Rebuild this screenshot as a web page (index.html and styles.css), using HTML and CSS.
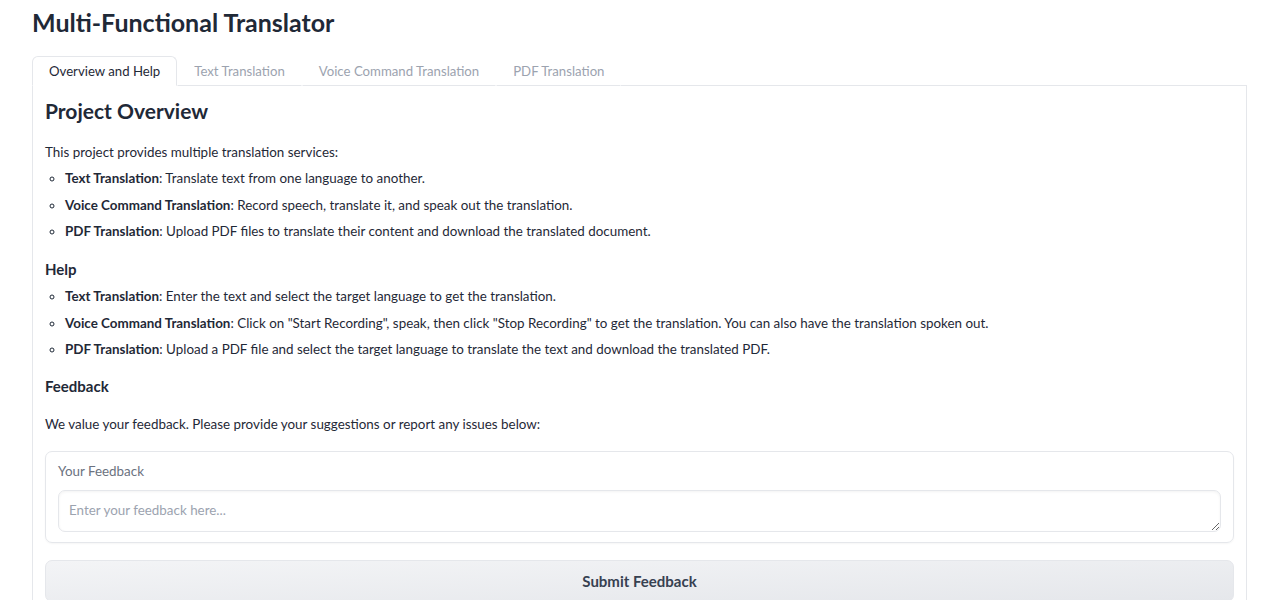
FILE: index.html
```html
<!DOCTYPE html>
<html>
<head>
<meta charset="utf-8">
<link rel="stylesheet" href="styles.css">
</head>
<body>
<div class="app">
  <h1 class="title">Multi-Functional Translator</h1>
  <div class="tabs">
    <div class="tab active">Overview and Help</div>
    <div class="tab">Text Translation</div>
    <div class="tab">Voice Command Translation</div>
    <div class="tab">PDF Translation</div>
    <div class="tab-fill"></div>
  </div>
  <div class="panel">
    <h2 class="h2">Project Overview</h2>
    <p class="para">This project provides multiple translation services:</p>
    <ul class="list">
      <li><b>Text Translation</b>: Translate text from one language to another.</li>
      <li><b>Voice Command Translation</b>: Record speech, translate it, and speak out the translation.</li>
      <li><b>PDF Translation</b>: Upload PDF files to translate their content and download the translated document.</li>
    </ul>
    <h3 class="h3">Help</h3>
    <ul class="list">
      <li><b>Text Translation</b>: Enter the text and select the target language to get the translation.</li>
      <li><b>Voice Command Translation</b>: Click on "Start Recording", speak, then click "Stop Recording" to get the translation. You can also have the translation spoken out.</li>
      <li><b>PDF Translation</b>: Upload a PDF file and select the target language to translate the text and download the translated PDF.</li>
    </ul>
    <h3 class="h3 fb">Feedback</h3>
    <p class="para value">We value your feedback. Please provide your suggestions or report any issues below:</p>
    <div class="block">
      <label class="label">Your Feedback</label>
      <textarea class="textarea" placeholder="Enter your feedback here..."></textarea>
    </div>
    <button class="btn">Submit Feedback</button>
  </div>
</div>
</body>
</html>
```
FILE: styles.css
```css
* { box-sizing: border-box; }
body {
  margin: 0;
  background: #ffffff;
  font-family: "Lato", "Noto Sans", sans-serif;
  color: #1f2937;
}
.app {
  padding: 0 39px 0 32px;
}
.title {
  margin: 0;
  padding-top: 5px;
  height: 56px;
  font-size: 25px;
  font-weight: 700;
  line-height: 34px;
  color: #1f2937;
}
.tabs {
  display: flex;
  height: 30px;
  align-items: stretch;
}
.tab {
  padding: 0 16px;
  font-size: 13.2px;
  line-height: 29px;
  color: #9ca3af;
  border: 1px solid transparent;
  border-bottom: 1px solid #e5e7eb;
}
.tab.active {
  color: #1f2937;
  border: 1px solid #e5e7eb;
  border-bottom-color: #ffffff;
  border-radius: 6px 6px 0 0;
}
.tab-fill {
  flex: 1;
  border-bottom: 1px solid #e5e7eb;
}
.panel {
  border: 1px solid #e5e7eb;
  border-top: none;
  padding: 10px 12px 0 12px;
  height: 515px;
  overflow: hidden;
}
.h2 {
  margin: 0 0 16px 0;
  font-size: 21px;
  font-weight: 700;
  line-height: 30px;
}
.para {
  margin: 0 0 5px 0;
  font-size: 13.4px;
  line-height: 21px;
}
.list {
  list-style: circle;
  margin: 0;
  padding-left: 20px;
}
.list li {
  font-size: 13.4px;
  line-height: 21px;
  margin-bottom: 5.5px;
  padding-left: 0;
}
.list b { font-weight: 700; }
.h3 {
  margin: 16px 0 6px 0;
  font-size: 15px;
  font-weight: 700;
  line-height: 22px;
}
.h3.fb { margin-top: 15px; margin-bottom: 17px; }
.value { margin-bottom: 16px; }
.block {
  border: 1px solid #e5e7eb;
  border-radius: 7px;
  padding: 9px 12px 10px 12px;
  box-shadow: 0 1px 2px rgba(0,0,0,0.04);
}
.label {
  display: block;
  font-size: 13.4px;
  line-height: 20px;
  color: #6b7280;
  margin-bottom: 9px;
}
.textarea {
  display: block;
  width: 100%;
  height: 42px;
  border: 1px solid #e5e7eb;
  border-radius: 7px;
  padding: 9px 10px;
  font-family: inherit;
  font-size: 13.4px;
  line-height: 20px;
  color: #1f2937;
  box-shadow: inset 0 1px 3px rgba(0,0,0,0.05);
  resize: vertical;
  outline: none;
}
.textarea::placeholder { color: #9ca3af; }
.btn {
  display: block;
  width: 100%;
  margin-top: 16.5px;
  height: 42px;
  border: 1px solid #e5e7eb;
  border-radius: 7px;
  background: linear-gradient(to bottom right, #f3f4f6, #e5e7eb);
  font-family: inherit;
  font-size: 15px;
  font-weight: 700;
  color: #374151;
}
```
